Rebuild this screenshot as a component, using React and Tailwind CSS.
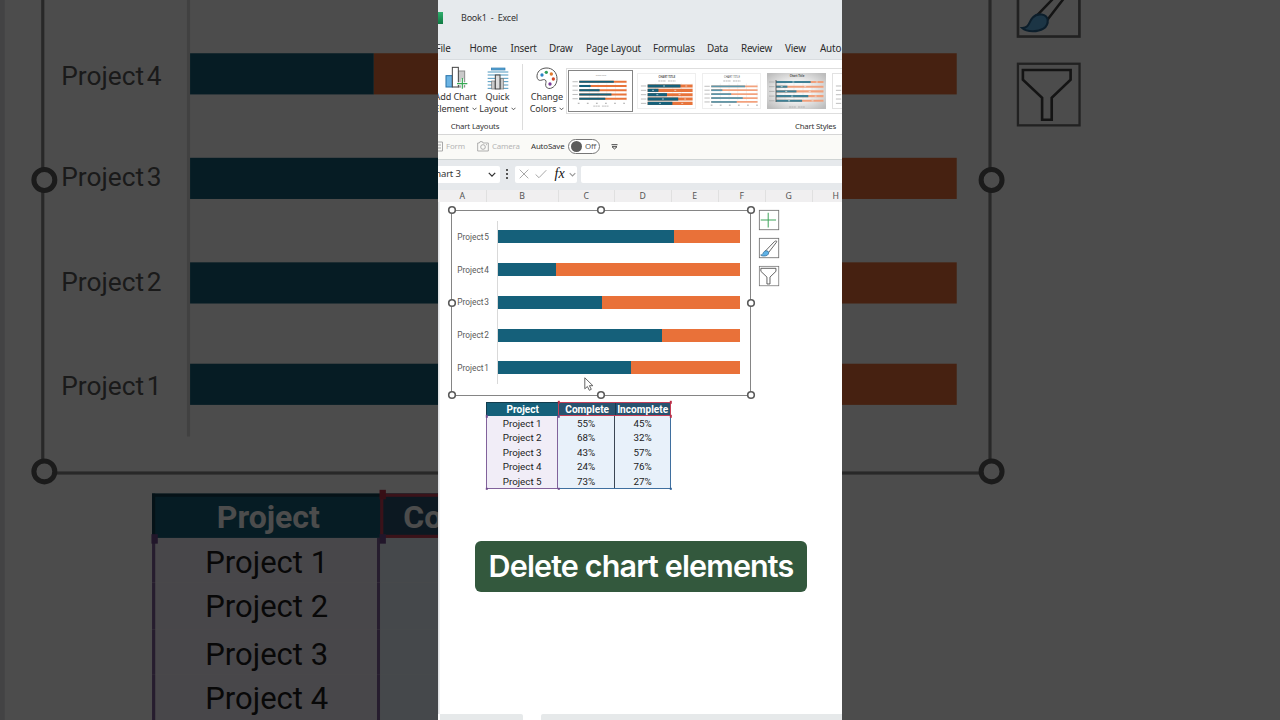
import React from "react";

const projects = [
  { name: "Project 1", complete: 55, incomplete: 45 },
  { name: "Project 2", complete: 68, incomplete: 32 },
  { name: "Project 3", complete: 43, incomplete: 57 },
  { name: "Project 4", complete: 24, incomplete: 76 },
  { name: "Project 5", complete: 73, incomplete: 27 },
];

const tabs = [
  { label: "File", width: "w-[34px]" },
  { label: "Home", width: "w-[41px]" },
  { label: "Insert", width: "w-[38.5px]" },
  { label: "Draw", width: "w-[37px]" },
  { label: "Page Layout", width: "w-[67px]" },
  { label: "Formulas", width: "w-[54px]" },
  { label: "Data", width: "w-[34px]" },
  { label: "Review", width: "w-[44px]" },
  { label: "View", width: "w-[35px]" },
  { label: "Auto", width: "w-[30px]" },
];

const sheetColumns = [
  { label: "A", width: "w-[48px]" },
  { label: "B", width: "w-[72px]" },
  { label: "C", width: "w-[56px]" },
  { label: "D", width: "w-[57px]" },
  { label: "E", width: "w-[47px]" },
  { label: "F", width: "w-[47px]" },
  { label: "G", width: "w-[47px]" },
  { label: "H", width: "w-[47px]" },
];

const Chevron = ({ className }) => (
  <svg viewBox="0 0 10 6" className={className} fill="none" stroke="currentColor" strokeWidth="1.6">
    <path d="M1 1l4 4 4-4" />
  </svg>
);

const AddChartIcon = () => (
  <svg width="24" height="24" viewBox="0 0 72 72" fill="none" strokeWidth="3" className="ml-[2px]">
    <rect x="3" y="29" width="19" height="34" fill="#6cb4e4" stroke="#2672a8" />
    <rect x="40" y="15" width="19" height="48" fill="#c9c9c9" stroke="#8a8a8a" />
    <rect x="22" y="4" width="18" height="59" fill="#fff" stroke="#444" />
    <path d="M52 38v30M36 53h31" stroke="#fff" strokeWidth="8" />
    <path d="M52 36v32M36 53h31" stroke="#36a853" strokeWidth="3.5" />
  </svg>
);

const QuickLayoutIcon = () => (
  <svg width="22" height="23" viewBox="0 0 66 69" fill="none">
    <rect x="13" y="3" width="41" height="6" fill="#5aa5d6" stroke="#2e78ab" strokeWidth="2" />
    <path d="M2 15h62M2 24h62M2 34h62M2 44h62M2 54h62M2 64h62" stroke="#4c97bf" strokeWidth="3" />
    <rect x="14" y="42" width="10" height="24" fill="#c9c9c9" stroke="#777" strokeWidth="2" />
    <rect x="40" y="35" width="10" height="31" fill="#c9c9c9" stroke="#777" strokeWidth="2" />
    <rect x="25" y="24" width="14" height="42" fill="#ddd" stroke="#444" strokeWidth="3" />
  </svg>
);

const PaletteIcon = () => (
  <svg width="22" height="23" viewBox="0 0 66 69" fill="none">
    <path
      d="M30 3C13 4 2 15 3 30c1 7 5 11 11 10 6-1 10-4 14-1 5 4 0 9 1 16 1 7 7 11 15 9 11-3 19-14 19-29C63 16 49 2 30 3z"
      fill="#fff"
      stroke="#555"
      strokeWidth="3"
    />
    <circle cx="18" cy="24" r="5" fill="#2b84c6" />
    <circle cx="31" cy="16" r="5" fill="#2f9e5b" />
    <circle cx="46" cy="21" r="5" fill="#e07a2e" />
    <circle cx="52" cy="36" r="5" fill="#d24726" />
    <circle cx="42" cy="51" r="5" fill="#7d3c98" />
  </svg>
);

// bar geometry of each gallery preview
const thumbStyles = {
  plain: { dark: "#14607a", orange: "#e8743b", thick: 2.2, top: 8.2, step: 4.5, left: 7.5, title: "Chart Title" },
  labels: { dark: "#14607a", orange: "#e8743b", thick: 3.3, top: 12.7, step: 4.6, left: 10, title: "CHART TITLE" },
  light: { dark: "#5d97ab", orange: "#f2a27e", thick: 1.9, top: 13, step: 4.15, left: 8.5, title: "CHART TITLE" },
  dark: { dark: "#3f8095", orange: "#f0a07c", thick: 2.1, top: 9, step: 4.7, left: 9, title: "Chart Title" },
};

const ChartThumb = ({ variant }) => {
  const s = thumbStyles[variant];
  const span = 56.5 - s.left;
  return (
    <svg viewBox="0 0 59 36" className="h-full w-full" preserveAspectRatio="none">
      <defs>
        <radialGradient id="thumbGlow" r="0.65">
          <stop offset="0.35" stopColor="#f8f8f8" />
          <stop offset="1" stopColor="#bdbdbd" />
        </radialGradient>
      </defs>
      {variant === "dark" && <rect width="59" height="36" fill="url(#thumbGlow)" />}
      <path d="M18 10v18M27 10v18M36 10v18M45 10v18M56 10v18" stroke="#dcdcdc" strokeWidth="0.4" />
      <text
        x="30"
        y={variant === "plain" ? 2.6 : 4}
        fontSize={variant === "plain" ? 2.2 : 2.8}
        fontWeight={variant === "labels" || variant === "dark" ? 700 : 400}
        textAnchor="middle"
        fill={variant === "plain" ? "#888" : "#555"}
      >
        {s.title}
      </text>
      {(variant === "labels" || variant === "light") && (
        <path d="M21 7.4h8M31 7.4h8" stroke="#aaa" strokeWidth="0.9" strokeDasharray="2 0.5" />
      )}
      {[73, 24, 43, 68, 55].map((value, i) => {
        const y = s.top + i * s.step;
        const split = s.left + (value * span) / 100;
        return (
          <g key={i}>
            <path d={`M${s.left - 7} ${y}h5.5`} stroke="#aaa" strokeWidth="0.8" />
            <path d={`M${s.left} ${y}H56.5`} stroke={s.orange} strokeWidth={s.thick} />
            <path d={`M${s.left} ${y}H${split}`} stroke={s.dark} strokeWidth={s.thick} />
            {(variant === "labels" || variant === "dark") && (
              <path
                d={`M${(s.left + split) / 2 - 1} ${y}h2M${(split + 56) / 2 - 1} ${y}h2`}
                stroke="#e9eff1"
                strokeWidth="0.7"
              />
            )}
          </g>
        );
      })}
      {variant === "dark" && <path d="M9 7v22" stroke="#555" strokeWidth="0.9" />}
      {(variant === "plain" || variant === "light") && (
        <path
          d={variant === "plain" ? "M6 31h51" : "M8 33h49"}
          stroke="#999"
          strokeWidth="0.9"
          strokeDasharray="1.8 7.6"
        />
      )}
      {(variant === "plain" || variant === "dark") && (
        <path d="M22 34h7M31 34h7" stroke="#aaa" strokeWidth="0.8" strokeDasharray="2 0.4" />
      )}
    </svg>
  );
};

const RibbonButton = ({ icon, first, second, className }) => (
  <div
    className={`flex flex-none flex-col items-center whitespace-nowrap pt-px text-[9.1px] leading-[11.5px] tracking-[-0.01em] ${className}`}
  >
    <div className="flex h-[26px] items-center justify-center">{icon}</div>
    <span>{first}</span>
    <span className="flex items-center gap-[3px]">
      {second}
      <Chevron className="h-[3.5px] w-[5px]" />
    </span>
  </div>
);

const TitleBar = () => (
  <div className="flex h-[36px] items-center bg-[#e6eaed] text-[9px] tracking-[-0.025em] text-[#333]">
    <div className="h-[12px] w-[5px] flex-none bg-linear-to-b from-[#2fae6d] to-[#0f7a43]" />
    <span className="ml-[18px] whitespace-pre">Book1  -  Excel</span>
  </div>
);

const TabBar = () => (
  <div className="flex h-[24px] items-center overflow-hidden border-b border-[#d9dde0] bg-[#e6eaed] pt-[2px] text-[9.9px] tracking-[-0.02em] text-[#2b2b2b]">
    <div className="-ml-[2.5px] flex">
      {tabs.map((tab) => (
        <span key={tab.label} className={`flex-none whitespace-nowrap ${tab.width}`}>
          {tab.label}
        </span>
      ))}
    </div>
  </div>
);

const Ribbon = () => (
  <div className="flex h-[75px] overflow-hidden border-b border-[#d6d6d6] bg-white text-[#333]">
    <div className="my-[4px] flex w-[85px] flex-none flex-col border-r border-[#dcdcdc]">
      <div className="-ml-[5px] flex">
        <RibbonButton className="w-[45px]" icon={<AddChartIcon />} first="Add Chart" second="Element" />
        <RibbonButton className="w-[39px]" icon={<QuickLayoutIcon />} first="Quick" second="Layout" />
      </div>
      <div className="mt-[6px] pr-[10px] text-center text-[7.8px] leading-[12px] tracking-[-0.02em]">Chart Layouts</div>
    </div>
    <div className="flex flex-none flex-col py-[4px]">
      <div className="flex">
        <RibbonButton className="ml-[5px] w-[38px]" icon={<PaletteIcon />} first="Change" second="Colors" />
        <div className="mt-[4px] flex h-[46px] items-center gap-[6px] border-y border-l border-[#dedede] pl-px">
          <div className="-mr-[2px] h-[42px] w-[65px] border border-[#858585] p-[3px]">
            <ChartThumb variant="plain" />
          </div>
          <div className="h-[36px] w-[59px] border border-[#eee]">
            <ChartThumb variant="labels" />
          </div>
          <div className="h-[36px] w-[59px] border border-[#eee]">
            <ChartThumb variant="light" />
          </div>
          <div className="h-[36px] w-[59px]">
            <ChartThumb variant="dark" />
          </div>
          <div className="h-[36px] w-[59px] border border-[#e2e2e2]">
            <ChartThumb variant="labels" />
          </div>
        </div>
      </div>
      <div className="mt-[6px] pl-[272px] text-[7.8px] leading-[12px] tracking-[-0.025em]">Chart Styles</div>
    </div>
  </div>
);

const QuickAccess = () => (
  <div className="flex h-[25px] items-center border-b border-[#cfd4d4] bg-[#fafaf7] pb-px text-[7.9px] tracking-[-0.02em] text-[#b5b5b5]">
    <svg width="5" height="11" viewBox="0 0 5 11" fill="none" stroke="#a9a9a9">
      <path d="M0 1h4.5v9H0M0 4h3M0 7h3" />
    </svg>
    <span className="ml-[3px] w-[31px]">Form</span>
    <svg width="12" height="11" viewBox="0 0 36 33" fill="none" stroke="#a0a0a0" strokeWidth="2.5">
      <path d="M2 6h5l2-4h7l2 4h16v24H2z" />
      <circle cx="18" cy="18" r="7" />
      <path d="M27 11h3" />
    </svg>
    <span className="ml-[3px] w-[39px]">Camera</span>
    <span className="w-[37px] text-[#333]">AutoSave</span>
    <div className="flex h-[15px] w-[32px] items-center gap-[3px] rounded-full border border-[#777] bg-white pl-[2px] text-[#555]">
      <span className="h-[11px] w-[11px] rounded-full bg-[#5c5c5c]" />
      Off
    </div>
    <svg width="7" height="6" viewBox="0 0 7 6" className="ml-[11px]" fill="none" stroke="#444">
      <path d="M0.5 0.7h6M1 2.7h5l-2.5 2.3z" />
    </svg>
  </div>
);

const FormulaBar = () => (
  <div className="flex h-[30px] items-center bg-[#e6e9ec] pb-[2px] text-[#333]">
    <div className="flex h-[17px] w-[61.5px] items-center justify-between overflow-hidden rounded-r-[2px] bg-white pr-[4px] text-[9.5px] tracking-[-0.02em]">
      <span className="-ml-[8.5px]">Chart 3</span>
      <Chevron className="h-[5px] w-[8px]" />
    </div>
    <div className="flex w-[15.5px] flex-col items-center gap-[2px]">
      <span className="h-[2px] w-[2px] bg-[#555]" />
      <span className="h-[2px] w-[2px] bg-[#555]" />
      <span className="h-[2px] w-[2px] bg-[#555]" />
    </div>
    <div className="flex h-[17px] w-[62px] items-center rounded-[2px] bg-white pl-[4px]">
      <svg width="10" height="10" viewBox="0 0 10 10" fill="none" stroke="#a8a8a8">
        <path d="M0.7 0.7l8.6 8.6M9.3 0.7L0.7 9.3" />
      </svg>
      <svg width="12" height="10" viewBox="0 0 12 10" className="ml-[6px]" fill="none" stroke="#a8a8a8">
        <path d="M0.6 5.5L4 8.7L11.3 1.2" />
      </svg>
      <span className="ml-[7.5px] font-['Liberation_Serif',serif] text-[14px] italic leading-[14px] text-[#111]">fx</span>
      <Chevron className="ml-[4.5px] h-[5px] w-[7px] text-[#999]" />
    </div>
    <div className="ml-[4px] h-[17px] flex-1 rounded-l-[2px] bg-white" />
  </div>
);

const ColumnHeaders = () => (
  <div className="flex h-[13px] overflow-hidden border-b border-[#c4c4c4] bg-[#f0eff0] pl-[0.7px] text-[8.7px] leading-[13px] text-[#555]">
    {sheetColumns.map((col) => (
      <span key={col.label} className={`flex-none border-r border-[#e0e0e0] text-center ${col.width}`}>
        {col.label}
      </span>
    ))}
  </div>
);

const handles = [
  "left-0 top-0",
  "left-1/2 top-0",
  "left-full top-0",
  "left-0 top-1/2",
  "left-full top-1/2",
  "left-0 top-full",
  "left-1/2 top-full",
  "left-full top-full",
];

const Chart = ({ magnified }) => (
  <div className="relative flex h-[186px] w-[300px] flex-none border border-[#858585] bg-white pt-[10.1px]">
    <div className="flex h-[163.5px] w-[37px] flex-col text-[8.3px] text-[#595959]">
      {[...projects].reverse().map((p) => (
        <span
          key={p.name}
          className="flex flex-1 items-center justify-end whitespace-nowrap pt-[0.3px] [word-spacing:-1.2px]"
        >
          {magnified && p.name === "Project 5" ? "" : p.name}
        </span>
      ))}
    </div>
    <div className="ml-[7.7px] flex h-[163.5px] w-[242.9px] flex-col border-l border-[#d9d9d9]">
      {[...projects].reverse().map((p) => (
        <div key={p.name} className="flex flex-1 items-center">
          <div className="h-[13px] bg-[#15607a]" style={{ width: `${p.complete}%` }} />
          <div className="h-[13px] bg-[#e97139]" style={{ width: `${p.incomplete}%` }} />
        </div>
      ))}
    </div>
    <div className="absolute -inset-[0.5px]">
      {handles.map((pos) => (
        <svg
          key={pos}
          viewBox="0 0 80 80"
          className={`absolute h-[8px] w-[8px] -translate-x-1/2 -translate-y-1/2 overflow-visible ${pos}`}
        >
          <circle cx="40" cy="40" r="33" fill="#fff" stroke="#5a5a5a" strokeWidth="16" />
        </svg>
      ))}
    </div>
  </div>
);

const ChartButtons = () => (
  <div className="ml-[8.2px] mt-[0.2px] flex flex-col gap-[7.6px]">
    <svg width="20.4" height="20.4" viewBox="0 0 61 61" fill="none" className="overflow-visible">
      <rect x="1" y="1" width="58" height="58" fill="#fff" stroke="#6f6f6f" strokeWidth="2.5" />
      <path d="M5 30h46M27.5 8v44" stroke="#3fa45b" strokeWidth="3" />
    </svg>
    <svg width="20.4" height="20.4" viewBox="0 0 61 61" fill="none" className="overflow-visible">
      <rect x="1" y="1" width="58" height="58" fill="#fff" stroke="#6f6f6f" strokeWidth="2.5" />
      <path d="M19 39L45 12C49 8 55 7 52 13L29 43z" fill="#fff" stroke="#444" strokeWidth="2.4" />
      <path d="M5 51c7 0 6-6 10-10 5-5 13-3 14 2 1 8-7 11-14 11-5 0-8-1-10-3z" fill="#5fb2e6" stroke="#2b6590" strokeWidth="2" />
    </svg>
    <svg width="20.4" height="20.4" viewBox="0 0 195 195" fill="none" className="overflow-visible">
      <rect x="3" y="3" width="186" height="186" fill="#fff" stroke="#6f6f6f" strokeWidth="7" />
      <path d="M18 22h144v29l-57 55v66H76v-66L18 51z" stroke="#444" strokeWidth="8" />
    </svg>
  </div>
);

const Marker = ({ className }) => (
  <span className={`absolute h-[2.4px] w-[2.4px] -translate-x-1/2 -translate-y-1/2 ${className}`} />
);

const DataTable = ({ magnified }) => (
  <div className="relative ml-[48px] mt-[6.2px] w-[185.4px] text-center text-[9.8px] text-[#1c1c1c]">
    <div className="flex h-[14.4px] bg-[#15607a] text-[10.1px] font-bold leading-[14.4px] text-white">
      <span className="w-[72.4px] border-l border-t border-[#123c4d]">Project</span>
      <span className="w-[56.5px] border-y border-l border-[#c43d55] bg-[#28536f]">Complete</span>
      <span className="w-[56.5px] border-y border-r border-[#c43d55] bg-[#28536f] shadow-[inset_1px_0_0_#173b52]">
        {magnified ? "" : "Incomplete"}
      </span>
    </div>
    {projects.map((p) => (
      <div key={p.name} className="flex h-[14.4px] leading-[16px]">
        <span className="w-[72.4px] border-l border-r border-[#81629b] bg-[#f1edf7]">
          {magnified && p.name === "Project 5" ? "" : p.name}
        </span>
        <span className="w-[56.5px] border-r border-[#3b4653] bg-[#e8f1fa]">{magnified ? "" : `${p.complete}%`}</span>
        <span className="w-[56.5px] border-r border-[#3f6f9f] bg-[#e8f1fa]">{magnified ? "" : `${p.incomplete}%`}</span>
      </div>
    ))}
    <div className="flex h-px">
      <span className="w-[72.4px] bg-[#81629b]" />
      <span className="flex-1 bg-[#3f6f9f]" />
    </div>
    <div className="absolute inset-x-[0.5px] bottom-[0.5px] top-[0.5px]">
      <Marker className="left-[72.4px] top-0 bg-[#b92f48]" />
      <Marker className="left-full top-0 bg-[#b92f48]" />
      <Marker className="left-full top-[14.1px] bg-[#b92f48]" />
      <Marker className="left-0 top-[14.1px] bg-[#6f4a8c]" />
      <Marker className="left-[72.4px] top-[14.1px] bg-[#6f4a8c]" />
      <Marker className="left-0 top-full bg-[#6f4a8c]" />
      <Marker className="left-[72.4px] top-full bg-[#6f4a8c]" />
      <Marker className="left-full top-full bg-[#2d6096]" />
    </div>
  </div>
);

const Sheet = ({ magnified = false }) => (
  <div className="relative h-[512px] w-[404px] bg-white pt-[7.5px] font-[Roboto,sans-serif] shadow-[inset_1.5px_0_0_#dfe1e4]">
    <div className="flex pl-[13px]">
      <Chart magnified={magnified} />
      <ChartButtons />
    </div>
    <DataTable magnified={magnified} />
    {!magnified && (
      <svg width="10" height="14" viewBox="0 0 10 14" className="absolute left-[146px] top-[175px]">
        <path d="M0.8 0.8v11l2.6-2.3 1.9 3.8 2-1-1.9-3.6h3.5z" fill="#fff" stroke="#555" strokeWidth="0.9" />
      </svg>
    )}
  </div>
);

const App = () => {
  return (
    <div className="relative h-[720px] w-[1280px] overflow-hidden bg-white font-['Noto_Sans',sans-serif]">
      {/* enlarged, dimmed copy of the sheet behind the video */}
      <div className="absolute inset-0 overflow-hidden" aria-hidden="true">
        <div className="-mt-[140px] w-[404px] origin-top-left scale-[3.168]">
          <Sheet magnified />
        </div>
        <div className="absolute inset-0 bg-black/70" />
      </div>

      <div className="relative mx-auto flex h-[720px] w-[404px] flex-col overflow-hidden bg-white">
        <TitleBar />
        <TabBar />
        <Ribbon />
        <QuickAccess />
        <FormulaBar />
        <ColumnHeaders />
        <div className="-mt-px flex-none">
          <Sheet />
        </div>
        <div className="flex h-[6px] flex-none gap-[18px] pl-[2px]">
          <div className="w-[83px] rounded-tr-[2px] bg-[#e6e9ea]" />
          <div className="flex-1 rounded-tl-[2px] bg-[#e6e9ea]" />
        </div>
        <div className="absolute left-[37px] top-[541px] flex h-[51px] w-[332px] items-center justify-center rounded-[6px] bg-[#33583d] pb-[2px] font-[Inter,sans-serif] text-[30.5px] font-semibold tracking-[-0.028em] text-white">
          <span className="whitespace-nowrap">Delete chart elements</span>
        </div>
      </div>
    </div>
  );
};

export default App;
